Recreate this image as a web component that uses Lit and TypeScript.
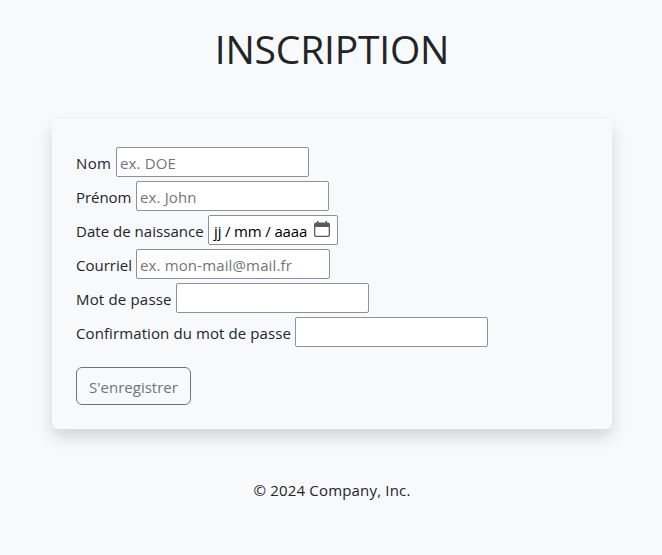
import { LitElement, html, css } from "lit";
import { customElement } from "lit/decorators.js";
import { styleMap } from "lit/directives/style-map.js";

interface Field {
  id: string;
  label: string;
  type: string;
  placeholder: string;
  labelWidth: number;
  tracking: number;
}

const FIELDS: Field[] = [
  { id: "nom", label: "Nom", type: "text", placeholder: "ex. DOE", labelWidth: 40, tracking: 0.4 },
  { id: "prenom", label: "Prénom", type: "text", placeholder: "ex. John", labelWidth: 60, tracking: -0.05 },
  { id: "naissance", label: "Date de naissance", type: "date", placeholder: "jj / mm / aaaa", labelWidth: 132, tracking: 0.03 },
  { id: "courriel", label: "Courriel", type: "email", placeholder: "ex. mon-mail@mail.fr", labelWidth: 60, tracking: 0 },
  { id: "passe", label: "Mot de passe", type: "password", placeholder: "", labelWidth: 100, tracking: 0.18 },
  { id: "confirmation", label: "Confirmation du mot de passe", type: "password", placeholder: "", labelWidth: 219, tracking: 0.1 },
];

@customElement("app-root")
export class AppRoot extends LitElement {
  static styles = css`
    :host {
      display: flex;
      flex-direction: column;
      align-items: center;
      box-sizing: border-box;
      height: 555px;
      padding-left: 2px;
      overflow: hidden;
      background: #f8f9fb;
      color: #212529;
      font: 15px/24px "Open Sans", "Noto Sans", sans-serif;
    }
    .title {
      margin: 25px 0 0;
      font-size: 39px;
      font-weight: 400;
      line-height: 48px;
      letter-spacing: -0.2px;
      white-space: nowrap;
    }
    .card {
      display: flex;
      flex-direction: column;
      align-items: flex-start;
      gap: 4px;
      box-sizing: border-box;
      width: 560px;
      height: 310px;
      margin-top: 46px;
      padding: 28px 24px 24px;
      border-radius: 6px;
      box-shadow: 0 8px 16px rgba(0, 0, 0, 0.15);
      background: #f8f9fb;
    }
    .row {
      display: flex;
      height: 30px;
    }
    .label {
      flex: none;
      line-height: 32px;
      white-space: nowrap;
    }
    .input {
      box-sizing: border-box;
      width: 193px;
      height: 30px;
      margin: 0;
      padding: 3px 3px 1px;
      border: 1px solid #8f8f9d;
      border-radius: 2px;
      background: #fff;
      color: #000;
      font: inherit;
      letter-spacing: 0.14px;
      outline: none;
    }
    .input[type="email"] {
      width: 194px;
    }
    .input::placeholder {
      color: #757575;
      opacity: 1;
    }
    .date {
      display: flex;
      justify-content: space-between;
      width: 130px;
      padding: 3px 7px 1px 5px;
      letter-spacing: -0.15px;
      white-space: nowrap;
    }
    .icon {
      flex: none;
      width: 16px;
      height: 16px;
      margin-top: 2px;
    }
    .button {
      box-sizing: border-box;
      width: 115px;
      height: 38px;
      margin: 16px 0 0;
      padding: 1px 0 0;
      border: 1px solid #6c757d;
      border-radius: 6px;
      background: transparent;
      color: #6c757d;
      font: inherit;
      white-space: nowrap;
    }
    .footer {
      margin: 49px 0 0;
      letter-spacing: 0.18px;
      white-space: nowrap;
    }
  `;

  private control(f: Field) {
    if (f.type !== "date") {
      return html`<input class="input" id=${f.id} type=${f.type} placeholder=${f.placeholder} />`;
    }
    return html`<div class="input date" id=${f.id}>
      <span class="parts">${f.placeholder}</span>
      <svg class="icon" viewBox="0 0 16 16" fill="#5b5b5b">
        <path
          fill-rule="evenodd"
          d="M3 0h1.5v1.5h7V0H13v1.5h1a2 2 0 0 1 2 2V14a2 2 0 0 1-2 2H2a2 2 0 0 1-2-2V3.500a2 2 0 0 1 2-2h1zM1.300 6v7.700a1 1 0 0 0 1 1h11.400a1 1 0 0 0 1-1V6z"
        />
      </svg>
    </div>`;
  }

  render() {
    return html`
      <h1 class="title">INSCRIPTION</h1>
      <form class="card">
        ${FIELDS.map(
          (f) => html`<div class="row">
            <label
              class="label"
              for=${f.id}
              style=${styleMap({ width: `${f.labelWidth}px`, letterSpacing: `${f.tracking}px` })}
              >${f.label}</label
            >
            ${this.control(f)}
          </div>`
        )}
        <button class="button" type="button">S'enregistrer</button>
      </form>
      <p class="footer">© 2024 Company, Inc.</p>
    `;
  }
}
